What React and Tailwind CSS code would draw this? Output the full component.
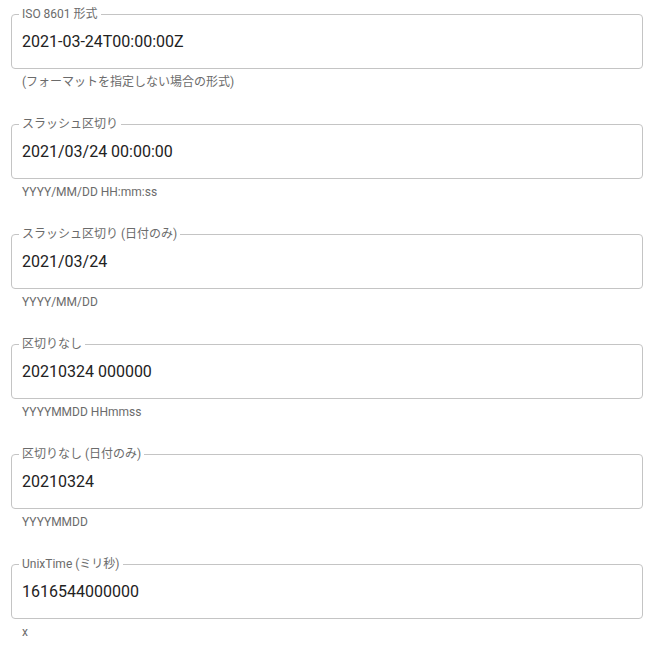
// Date format preview fields (MUI-like outlined text fields)
const FIELDS = [
  { label: 'ISO 8601 形式', value: '2021-03-24T00:00:00Z', helper: '(フォーマットを指定しない場合の形式)' },
  { label: 'スラッシュ区切り', value: '2021/03/24 00:00:00', helper: 'YYYY/MM/DD HH:mm:ss' },
  { label: 'スラッシュ区切り (日付のみ)', value: '2021/03/24', helper: 'YYYY/MM/DD' },
  { label: '区切りなし', value: '20210324 000000', helper: 'YYYYMMDD HHmmss' },
  { label: '区切りなし (日付のみ)', value: '20210324', helper: 'YYYYMMDD' },
  { label: 'UnixTime (ミリ秒)', value: '1616544000000', helper: 'x' },
]

function OutlinedField({ label, value, helper }) {
  return (
    <div className="flex flex-col">
      <div className="relative h-[55px] rounded border border-[#c4c4c4] flex items-center px-[10px]">
        <span className="absolute left-[7px] -top-[8px] bg-white px-[3px] text-[12px] leading-[14px] text-[#6b6b6b]">
          {label}
        </span>
        <span className="text-[16px] text-[#222222]">{value}</span>
      </div>
      <p className="mt-[3px] px-[11px] text-[12px] leading-[20px] text-[#6b6b6b]">{helper}</p>
    </div>
  )
}

export default function App() {
  return (
    <div
      className="min-h-screen bg-white px-[11px] pt-[14px] flex flex-col gap-[32px]"
      style={{ fontFamily: 'Roboto, "Noto Sans CJK JP", sans-serif' }}
    >
      {FIELDS.map((f) => (
        <OutlinedField key={f.label} {...f} />
      ))}
    </div>
  )
}
